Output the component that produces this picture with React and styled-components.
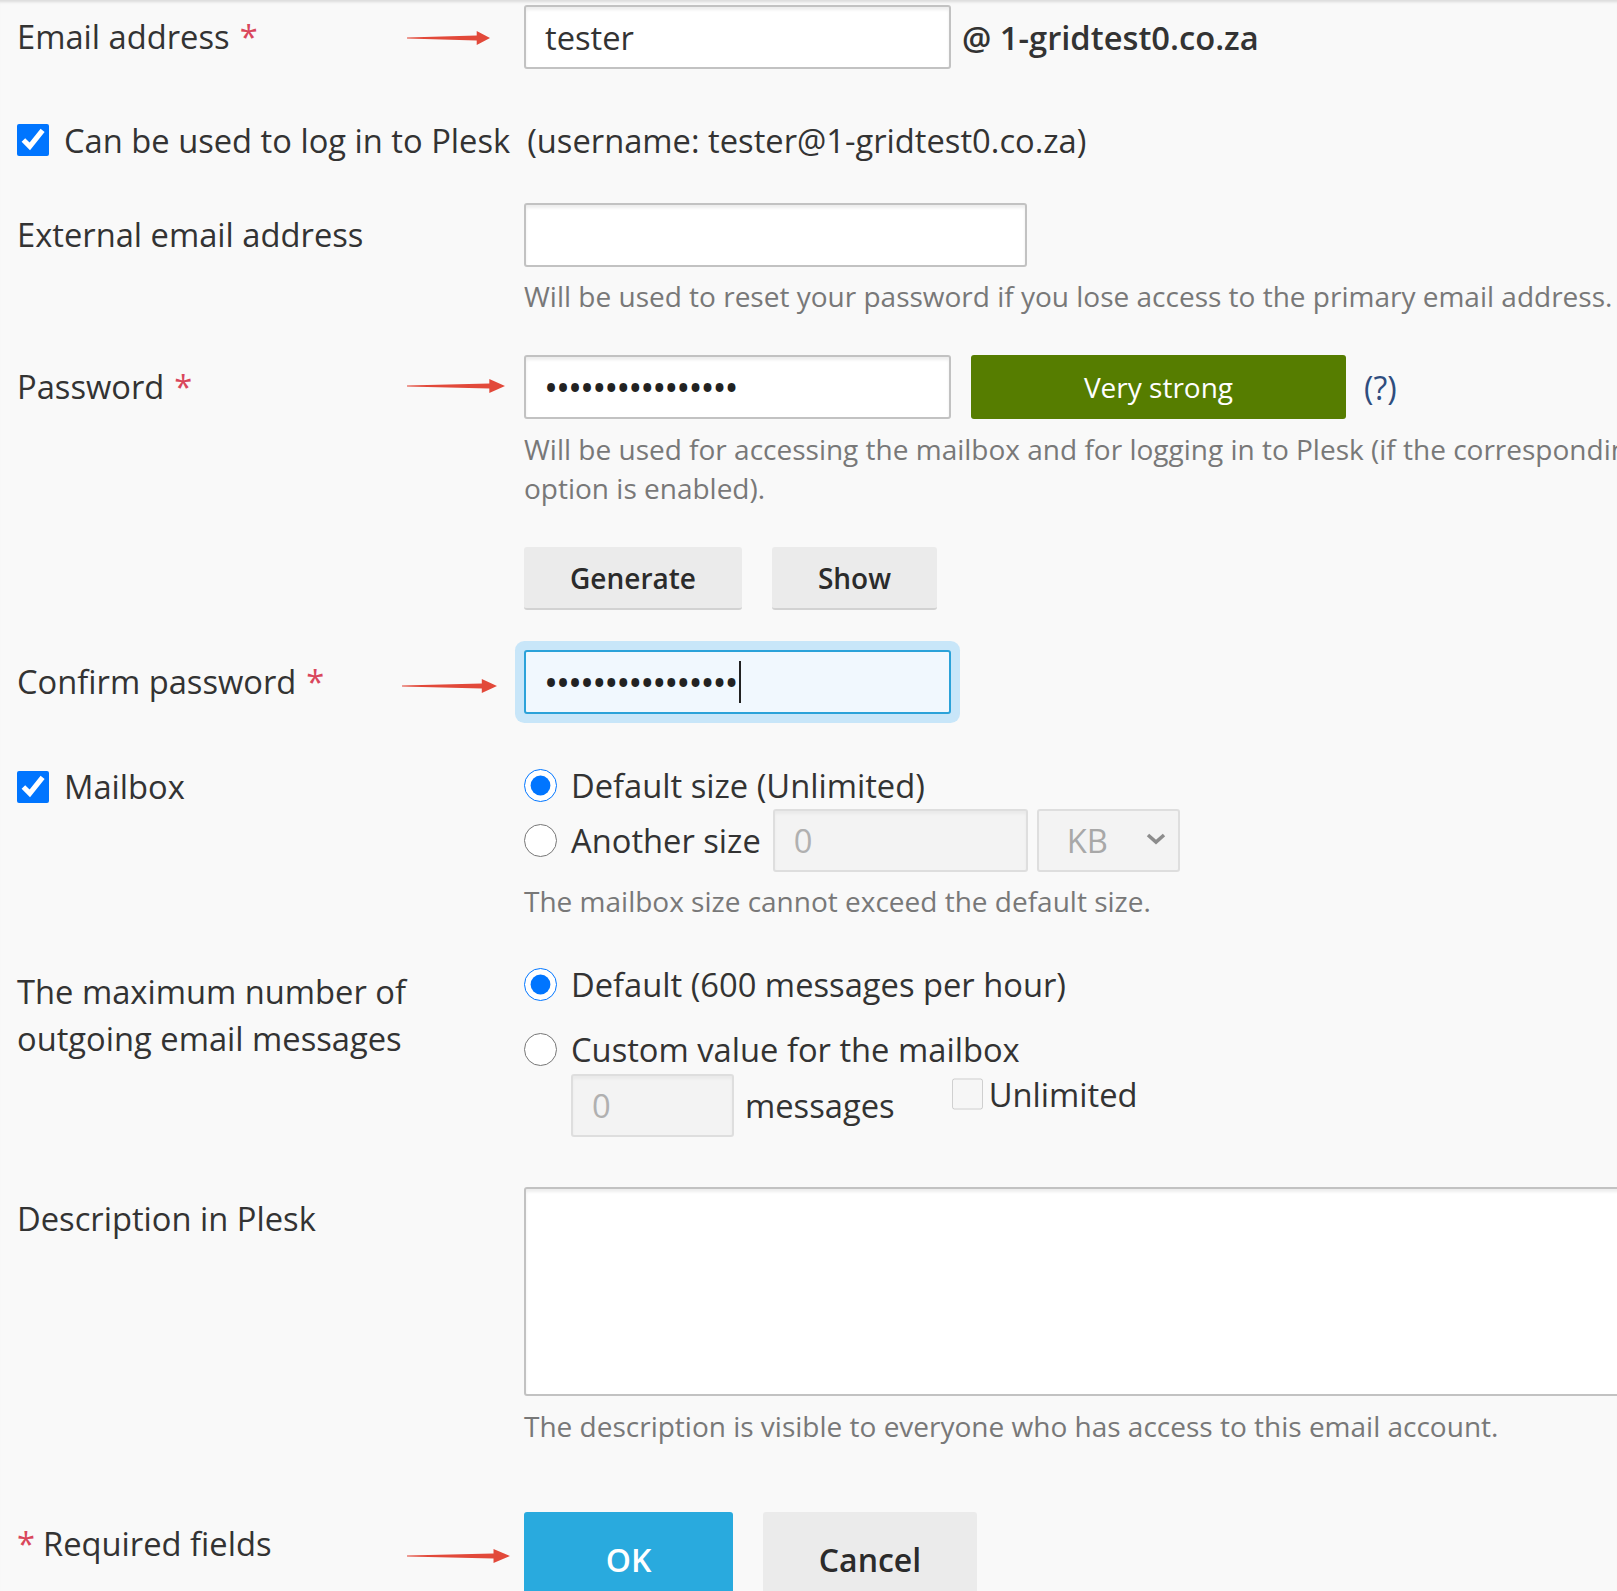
import React from 'react';
import styled, { createGlobalStyle } from 'styled-components';

const GlobalStyle = createGlobalStyle`
    html, body {
        margin: 0;
        padding: 0;
        background: #f9f9f9;
    }
    #root {
        overflow: hidden;
        height: 1591px;
    }
`

const Page = styled.div`
    box-sizing: border-box;
    min-height: 1591px;
    padding: 5px 0 0 17px;
    background: #f9f9f9;
    box-shadow: inset 0 4px 3px -2px rgba(0, 0, 0, 0.12);
    font-family: "Open Sans", "Noto Sans", sans-serif;
    font-size: 32.7px;
    color: #333;
`

const Row = styled.div`
    display: grid;
    grid-template-columns: 507px 1fr;
    margin-top: ${p => p.$gap || 0}px;
`

const FullRow = styled.div`
    display: flex;
    align-items: center;
    height: 44px;
    margin-top: ${p => p.$gap || 0}px;
    white-space: nowrap;
`

const LabelCell = styled.div`
    position: relative;
    padding-top: ${p => (p.$pad === undefined ? 10 : p.$pad)}px;
    line-height: ${p => p.$lh || 44}px;
`

const LabelLine = styled.div`
    display: flex;
    align-items: center;
    height: 44px;
`

const Required = styled.span`
    color: #d9475c;
    margin-left: 10px;
`

const RequiredLead = styled.span`
    color: #d9475c;
    margin-right: 8px;
`

const ArrowMark = styled.svg`
    position: absolute;
    left: ${p => p.$left}px;
    top: ${p => p.$top}px;
    width: ${p => p.$width}px;
    height: 16px;
`

const Field = styled.div`
    display: flex;
    flex-direction: column;
    align-items: flex-start;
    min-width: 0;
`

const Line = styled.div`
    display: flex;
    align-items: center;
    white-space: nowrap;
`

const TextInput = styled.input`
    box-sizing: border-box;
    width: ${p => p.$width}px;
    height: ${p => p.$height || 64}px;
    padding: 0 19px;
    border: 2px solid #c2c2c2;
    border-radius: 3px;
    background: #fff;
    box-shadow: inset 0 3px 3px rgba(0, 0, 0, 0.07);
    font-family: inherit;
    font-size: 32.7px;
    color: #333;
    outline: none;

    &:disabled {
        background: #f3f3f3;
        border-color: #dedede;
        color: #b0b0b0;
        box-shadow: inset 0 3px 3px rgba(0, 0, 0, 0.04);
    }
`

const SecretBox = styled.div`
    box-sizing: border-box;
    display: flex;
    align-items: center;
    width: 427px;
    height: 64px;
    padding: 0 19px;
    border: 2px solid ${p => (p.$focused ? '#2ba2d9' : '#c2c2c2')};
    border-radius: 3px;
    background: ${p => (p.$focused ? '#f1f8fe' : '#fff')};
    box-shadow: ${p => (p.$focused ? '0 0 0 9px #c8e6f9' : 'inset 0 3px 3px rgba(0, 0, 0, 0.07)')};
    color: #222;
`

const Caret = styled.span`
    display: inline-block;
    width: 2px;
    height: 42px;
    margin-left: 1px;
    background: #222;
`

const Dots = styled.span`
    font-size: 32px;
    line-height: 1;
    font-weight: 600;
`

const Domain = styled.span`
    margin-left: 11px;
    font-weight: 600;
    color: #333;
`

const Strength = styled.div`
    display: flex;
    align-items: center;
    justify-content: center;
    width: 375px;
    height: 64px;
    margin-left: 20px;
    border-radius: 3px;
    background: #567d00;
    color: #fff;
    font-size: 28px;
`

const HelpLink = styled.span`
    margin-left: 18px;
    color: #2f4d7e;
    font-size: 32px;
`

const Hint = styled.div`
    margin-top: ${p => p.$gap || 11}px;
    font-size: 28px;
    line-height: 39px;
    color: #787878;
    white-space: nowrap;
`

const ButtonRow = styled.div`
    display: flex;
    gap: 30px;
    margin-top: ${p => p.$gap || 0}px;
`

const Button = styled.button`
    box-sizing: border-box;
    width: ${p => p.$width}px;
    height: ${p => p.$height || 63}px;
    padding: 0;
    border: none;
    border-bottom: 2px solid ${p => (p.$primary ? '#2397c7' : '#d2d2d2')};
    border-radius: 3px;
    background: ${p => (p.$primary ? '#29aade' : '#ebebeb')};
    color: ${p => (p.$primary ? '#fff' : '#2b2b2b')};
    font-family: inherit;
    font-size: ${p => p.$size || 28}px;
    font-weight: 600;
    cursor: pointer;
`

const Check = styled.input`
    width: 32px;
    height: 32px;
    margin: 0 15px 0 0;
    accent-color: #0075ff;
    flex: none;
`

const Radio = styled.input`
    width: 33px;
    height: 33px;
    margin: 0 14px 0 0;
    accent-color: #0075ff;
    flex: none;
`

const Option = styled.label`
    display: flex;
    align-items: center;
    height: ${p => p.$height || 44}px;
    margin-top: ${p => p.$gap || 0}px;
    white-space: nowrap;
`

const SizeGap = styled.span`
    width: 12px;
`

const SelectWrap = styled.div`
    position: relative;
    margin-left: 9px;
`

const Select = styled.select`
    box-sizing: border-box;
    width: 143px;
    height: 63px;
    padding: 0 0 0 28px;
    appearance: none;
    border: 2px solid #dedede;
    border-radius: 3px;
    background: #f3f3f3;
    font-family: inherit;
    font-size: 32.7px;
    color: #a8a8a8;
    opacity: 1;
`

const Chevron = styled.svg`
    position: absolute;
    right: 12px;
    top: 22px;
    width: 24px;
    height: 16px;
    pointer-events: none;
`

const Nested = styled.div`
    display: flex;
    align-items: center;
    margin-top: 3px;
    padding-left: 47px;
`

const Words = styled.span`
    margin-left: 11px;
    white-space: nowrap;
`

const UnlimitedBox = styled.label`
    display: flex;
    align-items: center;
    align-self: flex-start;
    height: 44px;
    margin: -2px 0 0 57px;
    white-space: nowrap;
`

const SmallCheck = styled.input`
    width: 31px;
    height: 32px;
    margin: 0 6px 0 0;
`

const TextArea = styled.textarea`
    box-sizing: border-box;
    display: block;
    width: 1200px;
    height: 209px;
    border: 2px solid #c2c2c2;
    border-radius: 3px;
    background: #fff;
    box-shadow: inset 0 3px 3px rgba(0, 0, 0, 0.07);
    resize: none;
    font-family: inherit;
    font-size: 32px;
`

const Arrow = ({ left, top, width }) => (
    <ArrowMark $left={left} $top={top} $width={width} viewBox="0 0 100 16" preserveAspectRatio="none">
        <polygon points="0,7.6 84,5.6 84,1 100,8 84,15 84,10.4 0,8.4" fill="#e2493a" />
    </ArrowMark>
)

const App = () => {
    return (
        <Page>
            <GlobalStyle />

            <Row>
                <LabelCell>
                    Email address<Required>*</Required>
                    <Arrow left={390} top={25} width={83} />
                </LabelCell>
                <Field>
                    <Line>
                        <TextInput $width={427} type="text" defaultValue="tester" />
                        <Domain>@ 1-gridtest0.co.za</Domain>
                    </Line>
                </Field>
            </Row>

            <FullRow $gap={49}>
                <Check type="checkbox" defaultChecked />
                <span>Can be used to log in to Plesk&nbsp;&nbsp;(username: tester@1-gridtest0.co.za)</span>
            </FullRow>

            <Row $gap={41}>
                <LabelCell>External email address</LabelCell>
                <Field>
                    <TextInput $width={503} type="email" />
                    <Hint $gap={10}>Will be used to reset your password if you lose access to the primary email address.</Hint>
                </Field>
            </Row>

            <Row $gap={39}>
                <LabelCell>
                    Password<Required>*</Required>
                    <Arrow left={390} top={23} width={98} />
                </LabelCell>
                <Field>
                    <Line>
                        <SecretBox>
                            <Dots>••••••••••••••••</Dots>
                        </SecretBox>
                        <Strength>Very strong</Strength>
                        <HelpLink>(?)</HelpLink>
                    </Line>
                    <Hint>
                        Will be used for accessing the mailbox and for logging in to Plesk (if the corresponding<br />
                        option is enabled).
                    </Hint>
                    <ButtonRow $gap={39}>
                        <Button $width={218} type="button">Generate</Button>
                        <Button $width={165} type="button">Show</Button>
                    </ButtonRow>
                </Field>
            </Row>

            <Row $gap={40}>
                <LabelCell>
                    Confirm password<Required>*</Required>
                    <Arrow left={385} top={28} width={95} />
                </LabelCell>
                <Field>
                    <SecretBox $focused>
                        <Dots>••••••••••••••••</Dots>
                        <Caret />
                    </SecretBox>
                </Field>
            </Row>

            <Row $gap={49}>
                <LabelCell $pad={2}>
                    <LabelLine>
                        <Check type="checkbox" defaultChecked />
                        Mailbox
                    </LabelLine>
                </LabelCell>
                <Field>
                    <Option>
                        <Radio type="radio" name="size" defaultChecked />
                        Default size (Unlimited)
                    </Option>
                    <Option $height={63} $gap={2}>
                        <Radio type="radio" name="size" />
                        Another size
                        <SizeGap />
                        <TextInput $width={255} $height={63} type="text" defaultValue="0" disabled />
                        <SelectWrap>
                            <Select disabled defaultValue="KB">
                                <option value="KB">KB</option>
                                <option value="MB">MB</option>
                            </Select>
                            <Chevron viewBox="0 0 24 16">
                                <polyline points="4,4 12,11 20,4" fill="none" stroke="#8c8c8c" strokeWidth="3.6" />
                            </Chevron>
                        </SelectWrap>
                    </Option>
                    <Hint $gap={10}>The mailbox size cannot exceed the default size.</Hint>
                </Field>
            </Row>

            <Row $gap={41}>
                <LabelCell $pad={6} $lh={47}>
                    The maximum number of<br />
                    outgoing email messages
                </LabelCell>
                <Field>
                    <Option>
                        <Radio type="radio" name="limit" defaultChecked />
                        Default (600 messages per hour)
                    </Option>
                    <Option $gap={21}>
                        <Radio type="radio" name="limit" />
                        Custom value for the mailbox
                    </Option>
                    <Nested>
                        <TextInput $width={163} $height={63} type="text" defaultValue="0" disabled />
                        <Words>messages</Words>
                        <UnlimitedBox>
                            <SmallCheck type="checkbox" disabled />
                            Unlimited
                        </UnlimitedBox>
                    </Nested>
                </Field>
            </Row>

            <Row $gap={50}>
                <LabelCell>Description in Plesk</LabelCell>
                <Field>
                    <TextArea />
                    <Hint>The description is visible to everyone who has access to this email account.</Hint>
                </Field>
            </Row>

            <Row $gap={66}>
                <LabelCell>
                    <RequiredLead>*</RequiredLead>Required fields
                    <Arrow left={390} top={36} width={103} />
                </LabelCell>
                <ButtonRow>
                    <Button $primary $width={209} $height={96} $size={32} type="submit">OK</Button>
                    <Button $width={214} $height={96} $size={32} type="button">Cancel</Button>
                </ButtonRow>
            </Row>
        </Page>
    )
}

export default App
